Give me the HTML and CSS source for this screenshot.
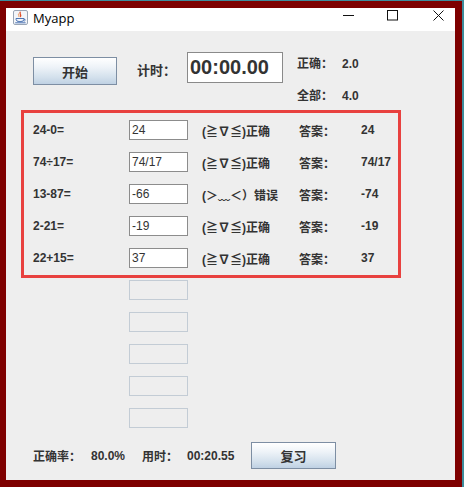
FILE: index.html
```html
<!DOCTYPE html>
<html lang="zh">
<head>
<meta charset="utf-8">
<title>Myapp</title>
<link rel="stylesheet" href="styles.css">
</head>
<body>
<div class="screen">
  <div class="window">
    <div class="titlebar">
      <svg class="appicon" width="15" height="15" viewBox="0 0 15 15">
        <rect x="0.5" y="0.5" width="14" height="14" rx="1.5" fill="#f3f5f9" stroke="#9aa6b6"/>
        <path d="M7.5 1.8 C5.6 3.6 9.2 4.6 7.2 7" stroke="#e0502a" fill="none" stroke-width="1.3"/>
        <path d="M5.6 3.6 C4.8 4.8 6.6 5.6 5.8 6.8" stroke="#f08a3a" fill="none" stroke-width="0.9"/>
        <path d="M3 8.5 h8 v0.8 q0 2.4 -4 2.4 q-4 0 -4 -2.4z" fill="none" stroke="#3b68ad" stroke-width="0.9"/>
        <path d="M11 9.2 q1.6 0 1.2 1.2 q-0.3 0.7 -1.6 0.7" fill="none" stroke="#3b68ad" stroke-width="0.8"/>
        <path d="M2.2 12.8 h10.4" stroke="#3b68ad" stroke-width="0.9"/>
      </svg>
      <span class="title">Myapp</span>
      <div class="controls">
        <svg class="ctl ctl-min" width="11" height="11" viewBox="0 0 11 11"><line x1="0" y1="5.5" x2="11" y2="5.5" stroke="#111" stroke-width="1"/></svg>
        <svg class="ctl ctl-max" width="11" height="11" viewBox="0 0 11 11"><rect x="0.5" y="0.5" width="10" height="9.5" fill="none" stroke="#111" stroke-width="1"/></svg>
        <svg class="ctl ctl-close" width="11" height="11" viewBox="0 0 11 11"><path d="M0.5 0.5 L10.5 10.5 M10.5 0.5 L0.5 10.5" stroke="#111" stroke-width="1"/></svg>
      </div>
    </div>
    <div class="content">
      <div class="top">
        <div class="btn btn-start">开始</div>
        <span class="timer-lbl">计时：</span>
        <div class="timer">00:00.00</div>
        <div class="stats">
          <div class="stat"><span class="stat-k">正确：</span><span>2.0</span></div>
          <div class="stat"><span class="stat-k">全部：</span><span>4.0</span></div>
        </div>
      </div>
      <div class="quiz">
        <div class="row"><span class="expr">24-0=</span><div class="field">24</div><span class="result">(≧∇≦)正确</span><span class="ans-k">答案：</span><span class="ans">24</span></div>
        <div class="row"><span class="expr">74÷17=</span><div class="field">74/17</div><span class="result">(≧∇≦)正确</span><span class="ans-k">答案：</span><span class="ans">74/17</span></div>
        <div class="row"><span class="expr">13-87=</span><div class="field">-66</div><span class="result">(＞﹏＜）错误</span><span class="ans-k">答案：</span><span class="ans">-74</span></div>
        <div class="row"><span class="expr">2-21=</span><div class="field">-19</div><span class="result">(≧∇≦)正确</span><span class="ans-k">答案：</span><span class="ans">-19</span></div>
        <div class="row"><span class="expr">22+15=</span><div class="field">37</div><span class="result">(≧∇≦)正确</span><span class="ans-k">答案：</span><span class="ans">37</span></div>
      </div>
      <div class="spare">
        <div class="field field-off"></div>
        <div class="field field-off"></div>
        <div class="field field-off"></div>
        <div class="field field-off"></div>
        <div class="field field-off"></div>
      </div>
      <div class="bottom">
        <span class="b-rate-k">正确率：</span>
        <span class="b-rate">80.0%</span>
        <span class="b-time-k">用时：</span>
        <span class="b-time">00:20.55</span>
        <div class="btn btn-review">复习</div>
      </div>
    </div>
  </div>
</div>
</body>
</html>
```

FILE: styles.css
```css
html, body {
  margin: 0;
  padding: 0;
}
body {
  width: 464px;
  height: 487px;
  overflow: hidden;
  background: #7e0000;
}
.screen {
  box-sizing: border-box;
  width: 464px;
  height: 487px;
  background: #7e0000;
  border-top: 1px solid #3d8c9c;
  border-right: 2px solid #3d8c9c;
  padding: 7px 0 0 6px;
}
.window {
  width: 449px;
  height: 472px;
  display: flex;
  flex-direction: column;
  background: #eeeeee;
}
.titlebar {
  flex: none;
  height: 23px;
  background: #ffffff;
  display: flex;
  align-items: flex-start;
}
.appicon {
  margin: 2px 0 0 7px;
  flex: none;
}
.title {
  margin-left: 5px;
  padding-top: 2px;
  font: 13px/17px "Open Sans", "Noto Sans", sans-serif;
  color: #000;
}
.controls {
  margin-left: auto;
  padding-right: 11px;
  display: flex;
  align-items: flex-start;
}
.ctl {
  margin-top: 2px;
  display: block;
}
.ctl-max {
  margin-left: 33px;
}
.ctl-close {
  margin-left: 35px;
}
.content {
  flex: 1;
  background: #eeeeee;
  font: bold 12px "Liberation Sans", "Noto Sans CJK SC", sans-serif;
  color: #333333;
}
.top {
  box-sizing: border-box;
  height: 79px;
  display: flex;
  align-items: flex-start;
  padding: 21px 0 0 27px;
}
.btn {
  box-sizing: border-box;
  border: 1px solid #7d8ea3;
  background: linear-gradient(#ffffff 0%, #eef3f8 35%, #d3e0ec 75%, #bfd1e3 100%);
  display: flex;
  align-items: center;
  justify-content: center;
  font: bold 13px "Liberation Sans", "Noto Sans CJK SC", sans-serif;
  color: #333;
}
.btn-start {
  margin-top: 5px;
  width: 84px;
  height: 28px;
}
.timer-lbl {
  margin: 5px 0 0 20px;
  width: 50px;
  height: 28px;
  line-height: 28px;
  font-size: 13px;
}
.timer {
  box-sizing: border-box;
  width: 96px;
  height: 31px;
  border: 1px solid #8a8a8a;
  background: #ffffff;
  padding-left: 2px;
  font: bold 20px/29px "Liberation Sans", sans-serif;
  color: #333;
}
.stats {
  margin: 2px 0 0 14px;
  display: flex;
  flex-direction: column;
  gap: 12px;
}
.stat {
  height: 20px;
  line-height: 20px;
  display: flex;
}
.stat-k {
  width: 45px;
}
.quiz {
  box-sizing: border-box;
  margin-left: 15px;
  width: 380px;
  border: 3px solid #e8413f;
  padding: 7px 0;
  display: flex;
  flex-direction: column;
  gap: 12px;
}
.row {
  height: 20px;
  display: flex;
  align-items: center;
  padding-left: 9px;
}
.expr {
  width: 96px;
}
.field {
  box-sizing: border-box;
  width: 59px;
  height: 20px;
  border: 1px solid #8c8c8c;
  background: #ffffff;
  padding-left: 2px;
  font: 12px/18px "Liberation Sans", sans-serif;
  color: #333;
  flex: none;
}
.field-off {
  background: #eeeeee;
  border-color: #c3ccd5;
}
.result {
  margin-left: 14px;
  width: 97px;
  white-space: nowrap;
}
.ans-k {
  width: 62px;
}
.spare {
  margin-top: 2px;
  padding-left: 123px;
  display: flex;
  flex-direction: column;
  gap: 12px;
}
.bottom {
  margin-top: 14px;
  height: 27px;
  display: flex;
  align-items: center;
  padding-left: 27px;
}
.b-rate-k {
  width: 58px;
}
.b-rate {
  width: 51px;
}
.b-time-k {
  width: 45px;
}
.b-time {
  width: 64px;
}
.btn-review {
  width: 85px;
  height: 27px;
}
```
